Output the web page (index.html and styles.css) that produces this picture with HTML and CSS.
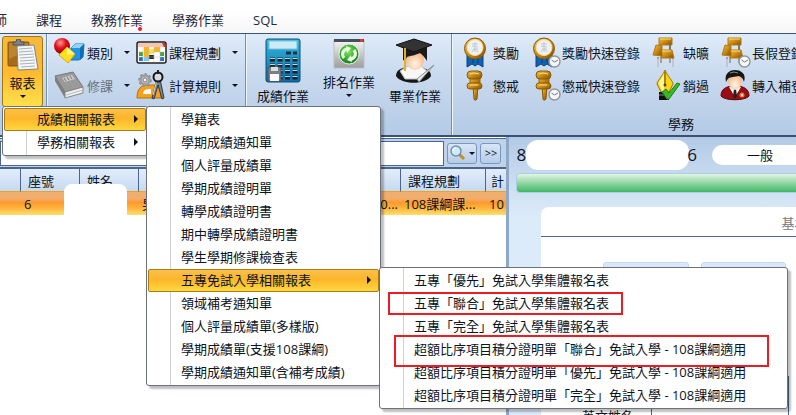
FILE: index.html
```html
<!DOCTYPE html>
<html lang="zh-Hant">
<head>
    <meta charset="UTF-8">
    <meta name="viewport" content="width=device-width, initial-scale=1.0">
    <title>成績相關報表</title>
    <link rel="stylesheet" href="styles.css">
</head>
<body>
    <!-- Shared gradients and icons -->
    <svg class="defs" width="0" height="0" aria-hidden="true">
        <defs>
            <linearGradient id="gold" x1="0" y1="0" x2="1" y2="1">
                <stop offset="0" stop-color="#f3c04a"/><stop offset="0.5" stop-color="#c98a14"/><stop offset="1" stop-color="#7d4b00"/>
            </linearGradient>
            <linearGradient id="silver" x1="0" y1="0" x2="0" y2="1">
                <stop offset="0" stop-color="#f6f6f6"/><stop offset="1" stop-color="#9c9c9c"/>
            </linearGradient>
            <linearGradient id="sky" x1="0" y1="0" x2="0" y2="1">
                <stop offset="0" stop-color="#35b5dc"/><stop offset="1" stop-color="#0b6ba8"/>
            </linearGradient>
            <radialGradient id="red" cx="0.4" cy="0.3" r="0.7">
                <stop offset="0" stop-color="#ff9a90"/><stop offset="0.5" stop-color="#e2101a"/><stop offset="1" stop-color="#8e0008"/>
            </radialGradient>
            <radialGradient id="green" cx="0.45" cy="0.35" r="0.7">
                <stop offset="0" stop-color="#8fe86a"/><stop offset="0.6" stop-color="#2fa52b"/><stop offset="1" stop-color="#0d6d17"/>
            </radialGradient>
            <radialGradient id="skin" cx="0.5" cy="0.7" r="0.7">
                <stop offset="0" stop-color="#fff6ee"/><stop offset="1" stop-color="#f5a868"/>
            </radialGradient>
            <g id="clock">
                <circle cx="24.5" cy="24.5" r="5.5" fill="#f7f8fa" stroke="#8f949c" stroke-width="1.4"/>
                <path d="M21.5 23l3 2 3.500-2" fill="none" stroke="#777" stroke-width="1"/>
            </g>
            <symbol id="i-medal" viewBox="0 0 31 31">
                <path d="M6 17v13l5-3 3 2 3-2 5 3V17z" fill="#0f62b4" stroke="#0a438a"/>
                <path d="M12 20v6M17 20v6" stroke="#073c7c"/>
                <circle cx="14" cy="11.500" r="10.500" fill="url(#gold)" stroke="#8a5a06"/>
                <circle cx="14" cy="10.500" r="8" fill="#eef1f4" stroke="#f9dc8b"/>
                <path d="M11 7h6M14 5v4M11 9l6 1M12 12h5M14 10v5M11 15l2-3M17 15l-2-3" stroke="#c3c8ce" stroke-width="1" fill="none"/>
            </symbol>
            <symbol id="i-gavel" viewBox="0 0 31 31">
                <path d="M12 16h5l-1 13c-1 1.500-3 1.500-3 0z" fill="url(#gold)" stroke="#8a5a06"/>
                <rect x="9" y="5" width="10" height="12" fill="url(#gold)" stroke="#9b680c"/>
                <rect x="6" y="1" width="15" height="8" rx="4" fill="url(#gold)" stroke="#8a5a06"/>
                <rect x="6" y="13" width="15" height="6" rx="3" fill="url(#gold)" stroke="#8a5a06"/>
                <path d="M9 4q4-2 9 0M9 15h8" stroke="#ffdf8a" fill="none"/>
            </symbol>
            <symbol id="i-medal-clock" viewBox="0 0 31 31">
                <use href="#i-medal" width="31" height="31"/><use href="#clock"/>
            </symbol>
            <symbol id="i-gavel-clock" viewBox="0 0 31 31">
                <use href="#i-gavel" width="31" height="31"/><use href="#clock"/>
            </symbol>
            <symbol id="i-chair" viewBox="0 0 31 31">
                <path d="M7 20v10M22 20v10M10 20v6M19 20v6" stroke="#8c9096" stroke-width="1.500"/>
                <path d="M7 22v8M22 22v8" stroke="#fff" stroke-width="0.800"/>
                <path d="M10 8v5M19 8v5" stroke="#777" stroke-width="2"/>
                <path d="M8 1h13v7H8z" fill="url(#gold)" stroke="#b37a12"/>
                <path d="M10 13h11l2 8H10z" fill="url(#gold)" stroke="#b37a12"/>
                <path d="M5 8l6 1v10l-9-1z" fill="url(#gold)" stroke="#b37a12"/>
                <path d="M9 2h11M11 14h9" stroke="#ffd96e"/>
            </symbol>
            <symbol id="i-chair-clock" viewBox="0 0 31 31">
                <use href="#i-chair" width="31" height="31"/><use href="#clock"/>
            </symbol>
            <symbol id="i-pen" viewBox="0 0 31 31">
                <path d="M8 22h10v8H8z" fill="#111"/>
                <path d="M8 25h10" stroke="#888"/>
                <path d="M14 0C11 7 6 11 6 14l4 8h8l4-8c0-3-5-7-8-14z" fill="#fbd317" stroke="#a67400"/>
                <path d="M13 3c-2 5-5 8-5 11l3 7h2z" fill="#fff79b"/>
                <path d="M14 2v12" stroke="#5a3b00"/><circle cx="14" cy="15" r="1.500" fill="#5a3b00"/>
                <path d="M11 22l4-3 3 4 8-10 3 1-11 15h-2z" fill="#3cb62b" stroke="#1b8415"/>
            </symbol>
            <symbol id="i-student" viewBox="0 0 31 31">
                <path d="M1 26c0-7 5-10 14-10s14 3 14 10c-4 5-24 5-28 0z" fill="#9b0d15" stroke="#5c0308"/>
                <path d="M9 17l6 10 6-10z" fill="#fff"/><path d="M14 19h2l1 7-2 3-2-3z" fill="#222"/>
                <ellipse cx="15" cy="11" rx="7" ry="9" fill="url(#skin)"/>
                <path d="M6 12C4 3 10 0 15 0s12 3 9 12c-1-4-3-5-5-6-4 1-9 1-10 2-2 1-2 3-3 4z" fill="#161616"/>
                <path d="M10 3q4-2 8 0" stroke="#888" fill="none"/>
                <circle cx="22" cy="25" r="2.500" fill="#f27b36"/><circle cx="22" cy="25" r="1" fill="#fff"/>
            </symbol>
            <symbol id="i-shapes" viewBox="0 0 31 31">
                <path d="M17 11l4-4h9l-1 13-4 3h-8z" fill="#2393df" stroke="#1872b4"/>
                <path d="M17 11l4-4h9l-4 4z" fill="#8ed4fb"/><path d="M26 11l4-4-1 13-3 3z" fill="#0f6db7"/>
                <circle cx="8" cy="9" r="8" fill="url(#red)"/>
                <path d="M13 10l8 7-7 9-9-8z" fill="#ffe01f" stroke="#e0a900"/><path d="M13 10l8 7-8 1z" fill="#fff27e"/>
            </symbol>
            <symbol id="i-book" viewBox="0 0 31 31">
                <path d="M1 6L19 2l10 15-18 5z" fill="#9a9a9a" stroke="#777"/>
                <path d="M1 6l10 16v6L1 11z" fill="#7e7e7e"/>
                <path d="M11 22l18-5v6l-18 5z" fill="#efefef" stroke="#888"/>
                <path d="M12 25l17-5" stroke="#bbb"/>
                <path d="M8 8l10-3 3 4-10 3z" fill="#c9c9c9"/><path d="M10 8l2 3M13 7l2 3M16 6l2 3" stroke="#777"/>
            </symbol>
            <symbol id="i-calendar" viewBox="0 0 31 23">
                <rect x="1" y="1" width="29" height="21" rx="2" fill="#fff" stroke="#222" stroke-width="1.500"/>
                <path d="M2 2h27v4H2z" fill="#f8c4b8"/><path d="M26 2h3v4h-1z" fill="#e02b1e"/>
                <path d="M8 6h5v10H8zM18 6h6v5h-6z" fill="#f8b51b"/><path d="M13 8h5v5h-5z" fill="#ffe25a"/>
                <path d="M3 11h4v4H3zM24 11h4v4h-4z" fill="#3fa935"/><path d="M3 16h4v4H3zM24 16h4v4h-4z" fill="#2a6fcb"/>
                <path d="M13 14h5v4h-5z" fill="#222"/><path d="M8 16h5v4H8z" fill="#7ec8ef"/>
                <path d="M7 6v15M13 6v15M18 6v15M24 6v15M2 11h27M2 16h27" stroke="#bbb" stroke-width="0.500"/>
            </symbol>
            <symbol id="i-compass" viewBox="0 0 31 31">
                <path d="M1 28c0-9 4-13 10-13h14v13z" fill="#f6a11e" stroke="#c16c00"/>
                <path d="M7 24c0-4 3-5 8-5v5z" fill="#fff"/>
                <circle cx="9" cy="10" r="4.500" fill="#c5c8cc" stroke="#9a9ea3" stroke-width="2.500"/>
                <circle cx="9" cy="10" r="6" fill="none" stroke="#8b8f94" stroke-width="1.500" stroke-dasharray="2.500 2"/>
                <circle cx="9" cy="10" r="2" fill="#fff" stroke="#777"/>
                <path d="M21 9l-5 19 2 1 4-14 4 14 2-1-4-19z" fill="#7b828a" stroke="#34393f"/>
                <path d="M21 10l-4 15" stroke="#ddd"/>
                <circle cx="22" cy="7" r="4.500" fill="#d8dce1" stroke="#15181c" stroke-width="2"/><path d="M22 0v4" stroke="#222" stroke-width="2"/>
            </symbol>
            <symbol id="i-clipboard" viewBox="0 0 32 33">
                <rect x="1" y="3" width="21" height="24" rx="1" fill="#a66b1c" stroke="#8a5814"/>
                <path d="M2 4h19v7L2 20z" fill="#bd852f"/>
                <path d="M6 6V3h3l1-3h3l1 3h3v3z" fill="#7d8389" stroke="#4d5357"/>
                <path d="M10 7l17-1 4 24-20 1z" fill="#f4f6f7" stroke="#7c858a"/>
                <path d="M12 10l13-1M12 13l14-1M12 16l15-1M13 19l14-1M13 22l15-1M13 25l15-1M14 28l14-1" stroke="#aab3b9"/>
            </symbol>
            <symbol id="i-calc" viewBox="0 0 36 46">
                <rect x="1" y="1" width="34" height="43" rx="2" fill="url(#sky)" stroke="#0a5079"/>
                <rect x="4" y="3" width="28" height="8" fill="#ccecf8" stroke="#77c2df"/>
                <path d="M21 15h5M28 15h4" stroke="#133646" stroke-width="3"/>
                <path d="M5 21.500h28M5 27.500h28M5 33.500h28M5 39.500h28" stroke="#17242c" stroke-width="4" stroke-dasharray="5 2.500"/>
                <path d="M5 20.500h28M5 26.500h28M5 32.500h28M5 38.500h28" stroke="#b9d9e8" stroke-width="1" stroke-dasharray="5 2.500"/>
                <path d="M3 29h13v14H3z" fill="#76808b" stroke="#4a525b"/><path d="M6 29h7v4H6z" fill="#ddd"/><path d="M5 36h9v7H5z" fill="#fafafa"/>
            </symbol>
            <symbol id="i-refresh" viewBox="0 0 32 30">
                <rect x="1" y="1" width="30" height="28" fill="url(#silver)" stroke="#b9bfc6"/>
                <path d="M1 0h30v3H1z" fill="#474f5c"/><path d="M27 0h3v3h-3z" fill="#dc3a37"/>
                <circle cx="16" cy="15" r="10" fill="url(#green)" stroke="#fff" stroke-width="0.800"/>
                <path d="M11 19c-3-4-1-8 3-9M21 11c3 4 1 8-3 9" fill="none" stroke="#e9ffe4" stroke-width="3"/>
                <path d="M13 7l5 2-4 5zM19 23l-5-2 4-5z" fill="#e9ffe4"/>
            </symbol>
            <symbol id="i-graduate" viewBox="0 0 42 46">
                <path d="M2 38c0-6 5-9 17-9s18 3 18 9c-5 9-30 9-35 0z" fill="#161616"/>
                <path d="M6 33l8-5h13l6 5-8 8H11z" fill="#f7f7f7" stroke="#bbb"/>
                <ellipse cx="21" cy="22" rx="9" ry="10" fill="url(#skin)"/>
                <path d="M9 22V9h24v14c-2-3-4-6-7-8-4 2-10 3-13 4l-2 4z" fill="#1b1b1b"/>
                <path d="M2 7l18-6 18 6-18 7z" fill="#333" stroke="#111"/>
                <path d="M11 10v23" stroke="#e3ae21" stroke-width="2"/>
                <path d="M40 27L25 44l-2-3z" fill="#e9ecef" stroke="#888"/>
            </symbol>
            <symbol id="i-search" viewBox="0 0 16 16">
                <path d="M9 9l5 5" stroke="#c78a24" stroke-width="3"/>
                <circle cx="6" cy="6" r="5" fill="#cdebfb" stroke="#7390ad" stroke-width="1.500"/><path d="M3 6q0-3 3-3" stroke="#fff" fill="none" stroke-width="1.500"/>
            </symbol>
        </defs>
    </svg>

    <!-- Tabs -->
    <nav class="tabs">
        <a href="#">導師</a>
        <a href="#">課程</a>
        <a href="#" class="marked">教務作業</a>
        <a href="#">學務作業</a>
        <a href="#">SQL</a>
    </nav>

    <!-- Ribbon -->
    <div class="ribbon">
        <div class="group report-group">
            <button class="report-button">
                <svg width="32" height="33"><use href="#i-clipboard"/></svg>
                <span>報表</span>
                <i class="caret"></i>
            </button>

            <ul class="menu main-menu">
                <li>
                    <button class="active">成績相關報表<i class="arrow"></i></button>
                    <ul class="menu score-menu">
                        <li><button>學籍表</button></li>
                        <li><button>學期成績通知單</button></li>
                        <li><button>個人評量成績單</button></li>
                        <li><button>學期成績證明單</button></li>
                        <li><button>轉學成績證明書</button></li>
                        <li><button>期中轉學成績證明書</button></li>
                        <li><button>學生學期修課檢查表</button></li>
                        <li>
                            <button class="active">五專免試入學相關報表<i class="arrow"></i></button>
                            <ul class="menu exam-menu">
                                <li><button>五專「優先」免試入學集體報名表</button></li>
                                <li><button>五專「聯合」免試入學集體報名表</button></li>
                                <li><button>五專「完全」免試入學集體報名表</button></li>
                                <li><button>超額比序項目積分證明單「聯合」免試入學 - 108課綱適用</button></li>
                                <li><button>超額比序項目積分證明單「優先」免試入學 - 108課綱適用</button></li>
                                <li><button>超額比序項目積分證明單「完全」免試入學 - 108課綱適用</button></li>
                            </ul>
                        </li>
                        <li><button>領域補考通知單</button></li>
                        <li><button>個人評量成績單(多樣版)</button></li>
                        <li><button>學期成績單(支援108課綱)</button></li>
                        <li><button>學期成績通知單(含補考成績)</button></li>
                    </ul>
                </li>
                <li><button>學務相關報表<i class="arrow"></i></button></li>
            </ul>
        </div>

        <div class="group course-group">
            <button class="tool"><svg width="31" height="31"><use href="#i-shapes"/></svg>類別<i class="caret"></i></button>
            <button class="tool"><svg width="31" height="23"><use href="#i-calendar"/></svg>課程規劃<i class="caret"></i></button>
            <button class="tool dim"><svg width="31" height="31"><use href="#i-book"/></svg>修課<i class="caret"></i></button>
            <button class="tool"><svg width="31" height="31"><use href="#i-compass"/></svg>計算規則<i class="caret"></i></button>
        </div>

        <div class="group work-group">
            <button class="big"><svg width="36" height="46"><use href="#i-calc"/></svg>成績作業</button>
            <button class="big"><svg width="32" height="32"><use href="#i-refresh"/></svg>排名作業<i class="caret"></i></button>
            <button class="big"><svg width="42" height="46"><use href="#i-graduate"/></svg>畢業作業</button>
        </div>

        <div class="group affairs-group">
            <div class="affairs-tools">
                <button class="tool"><svg width="31" height="31"><use href="#i-medal"/></svg>獎勵</button>
                <button class="tool"><svg width="31" height="31"><use href="#i-medal-clock"/></svg>獎勵快速登錄</button>
                <button class="tool"><svg width="31" height="31"><use href="#i-chair"/></svg>缺曠</button>
                <button class="tool"><svg width="31" height="31"><use href="#i-chair-clock"/></svg>長假登錄</button>
                <button class="tool"><svg width="31" height="31"><use href="#i-gavel"/></svg>懲戒</button>
                <button class="tool"><svg width="31" height="31"><use href="#i-gavel-clock"/></svg>懲戒快速登錄</button>
                <button class="tool"><svg width="31" height="31"><use href="#i-pen"/></svg>銷過</button>
                <button class="tool"><svg width="31" height="31"><use href="#i-student"/></svg>轉入補登</button>
            </div>
            <div class="caption">學務</div>
        </div>
    </div>

    <main class="workspace">
        <!-- Student list -->
        <section class="list">
            <div class="search">
                <input type="text" aria-label="搜尋">
                <button class="find" aria-label="搜尋"><svg width="16" height="16"><use href="#i-search"/></svg><i class="caret"></i></button>
                <button class="more">&gt;&gt;</button>
            </div>
            <table>
                <colgroup>
                    <col class="c-class"><col class="c-seat"><col class="c-name"><col class="c-gender"><col class="c-plan"><col class="c-rule">
                </colgroup>
                <thead>
                    <tr><th></th><th>座號</th><th>姓名</th><th>性別</th><th>課程規劃</th><th>計</th></tr>
                </thead>
                <tbody>
                    <tr><td></td><td>6</td><td></td><td><div class="gender"><span>男</span><span>10...</span></div></td><td>108課綱課...</td><td>10</td></tr>
                </tbody>
            </table>
            <div class="name-mask"></div>
        </section>

        <!-- Student detail -->
        <section class="detail">
            <header>
                <span>8</span>
                <span class="title-mask"></span>
                <span class="tail">6</span>
                <span class="status">一般</span>
            </header>
            <div class="bar"></div>
            <div class="card">
                <h2>基本資料</h2>
                <div class="panels"><div></div><div></div></div>
                <div class="form"><label for="english-name">英文姓名</label><input id="english-name" type="text"></div>
            </div>
        </section>
    </main>

    <div class="highlight highlight-form"></div>
    <div class="highlight highlight-proof"></div>
</body>
</html>
```
FILE: styles.css
```css
* {
    box-sizing: border-box;
}
body {
    margin: 0;
    height: 100vh;
    display: flex;
    flex-direction: column;
    overflow: hidden;
    font-family: "Open Sans", "Noto Sans CJK TC", sans-serif;
    font-size: 13px;
    line-height: 18px;
    color: #0c1322;
    background: #fff;
}
button, input {
    font: inherit;
    color: inherit;
    margin: 0;
    padding: 0;
    border: 0;
    background: none;
}
button {
    white-space: nowrap;
    cursor: pointer;
}
svg {
    display: block;
    flex: none;
}
.defs {
    position: absolute;
}
.caret {
    flex: none;
    border: 3px solid transparent;
    border-top-color: #0c1322;
    border-bottom: 0;
}
.arrow {
    border: 4px solid transparent;
    border-left-color: #0c1322;
    border-right: 0;
}

/* Tabs */
.tabs {
    flex: none;
    display: flex;
    align-items: center;
    height: 33px;
    padding-top: 6px;
    margin-left: -19px;
    gap: 29px;
    background: linear-gradient(#fff 30%, #f6f6f6);
}
.tabs a {
    position: relative;
    flex: none;
    color: #1f2a40;
    text-decoration: none;
}
.marked::after {
    content: "";
    position: absolute;
    right: 1px;
    bottom: -2px;
    width: 4px;
    height: 4px;
    border-radius: 50%;
    background: #ed1c24;
}

/* Ribbon */
.ribbon {
    flex: none;
    display: flex;
    height: 104px;
    border-top: 1px solid #39557f;
    border-bottom: 2px solid #3a5272;
    background: linear-gradient(#dfebf9, #c9daee 40%, #b4cae5);
}
.group {
    flex: none;
    border-right: 1px solid #7590b6;
    box-shadow: 1px 0 #eef5fc;
}
.report-group {
    position: relative;
    padding: 2px 3px 0 2px;
}
.report-button {
    display: flex;
    flex-direction: column;
    align-items: center;
    width: 41px;
    height: 71px;
    padding-top: 2px;
    border: 1px solid #a4760f;
    border-radius: 3px;
    background: linear-gradient(#f6b93a, #fdb930 50%, #ffe04a);
}
.report-button span {
    margin: 2px 0 3px;
}
.course-group {
    display: grid;
    grid-template-columns: 82px 108px;
    grid-template-rows: 33px 33px;
    padding: 2px 1px 0 7px;
}
.tool {
    display: flex;
    align-items: center;
    gap: 2px;
}
.tool .caret {
    margin-left: 9px;
}
.dim {
    color: #66707e;
}
.work-group {
    display: flex;
    align-items: flex-start;
    gap: 14px;
    padding: 4px 10px 0 11px;
}
.big {
    display: flex;
    flex-direction: column;
    align-items: center;
}
.big svg {
    margin-bottom: 3px;
}
.big .caret {
    margin-top: 3px;
}
.affairs-group {
    display: flex;
    flex-direction: column;
    justify-content: space-between;
    width: 460px;
    padding: 2px 10px 2px 9px;
}
.affairs-tools {
    display: grid;
    grid-template-columns: 69px 121px 69px 120px;
    grid-template-rows: 33px 33px;
}
.affairs-tools .tool {
    gap: 1px;
}
.caption {
    text-align: center;
}

/* Menus */
.menu {
    position: absolute;
    z-index: 5;
    margin: 0;
    padding: 1px;
    list-style: none;
    border: 1px solid #6c717a;
    border-radius: 3px;
    background: linear-gradient(90deg, transparent 23px, #cdd0d4 23px, #cdd0d4 24px, transparent 24px) #fff;
    box-shadow: 3px 3px 2px rgba(0, 0, 0, 0.25);
}
.main-menu {
    top: 72px;
    left: 2px;
    width: 146px;
}
.score-menu {
    top: -2px;
    left: 100%;
    width: 235px;
}
.exam-menu {
    top: -2px;
    left: 100%;
    width: 409px;
}
.menu li {
    position: relative;
}
.menu button {
    display: flex;
    align-items: center;
    justify-content: space-between;
    width: 100%;
    height: 23px;
    padding: 0 7px 2px 32px;
    border: 1px solid transparent;
    border-radius: 2px;
    text-align: left;
}
.menu .active {
    border-color: #a57c18;
    background: linear-gradient(#f9c04a, #fdb52b 45%, #ffd83e);
}

/* Workspace */
.workspace {
    flex: 1;
    min-height: 0;
    display: grid;
    grid-template-columns: 64% 1fr;
}
.list {
    position: relative;
    overflow: hidden;
    padding-top: 1px;
    border-right: 3px solid #8fa8c8;
    background: #fff;
}
.search {
    display: flex;
    align-items: center;
    gap: 3px;
    height: 31px;
    padding: 0 5px 0 0;
    border-top: 1px solid #4a658e;
    border-bottom: 2px solid #4a658e;
    background: #bed2ea;
}
.search input {
    flex: 1;
    height: 25px;
    border: 1px solid #4a658e;
    background: #fff;
}
.search button {
    display: flex;
    align-items: center;
    justify-content: center;
    height: 21px;
    border: 1px solid #7b97bd;
    border-radius: 3px;
    background: linear-gradient(#d8e6f6, #b5cbe6);
}
.find {
    width: 30px;
    gap: 3px;
}
.more {
    width: 21px;
    font-size: 11px;
}
table {
    width: 100%;
    table-layout: fixed;
    border-collapse: separate;
    border-spacing: 0;
    white-space: nowrap;
}
.c-class {
    width: 21px;
}
.c-seat, .c-name {
    width: 59px;
}
.c-gender {
    width: 262px;
}
.c-plan {
    width: 85px;
}
th, td {
    overflow: hidden;
    text-align: left;
    font-weight: normal;
}
th {
    height: 23px;
    padding: 2px 0 0 7px;
    border-right: 1px solid #4a658e;
    border-bottom: 1px solid #e9a520;
    background: linear-gradient(#e2edfa, #c6d9f1);
}
th:last-child {
    padding-left: 5px;
    border-right: 0;
}
td {
    height: 23px;
    padding: 0 3px;
    background: linear-gradient(#f0ad6c 30%, #fe9a2c 45%, #ffae38 65%, #ffe069);
}
td:last-child {
    padding-right: 0;
}
.gender {
    display: flex;
    justify-content: space-between;
}
.name-mask {
    position: absolute;
    top: 47px;
    left: 64px;
    width: 63px;
    height: 32px;
    border-radius: 8px 8px 0 0;
    background: #fff;
}

/* Detail */
.detail {
    display: flex;
    flex-direction: column;
    min-width: 0;
    overflow: hidden;
    padding-left: 7px;
    background: linear-gradient(#b3cae7, #dcebfa 80px);
}
.detail header {
    flex: none;
    display: flex;
    align-items: center;
    height: 36px;
    font-size: 17px;
}
.title-mask {
    flex: 1;
    height: 30px;
    border-radius: 12px;
    background: #fff;
}
.tail {
    margin-left: -2px;
}
.status {
    width: 100px;
    height: 20px;
    margin: 0 -16px 0 15px;
    padding-left: 35px;
    border-radius: 10px;
    font-size: 13px;
    line-height: 20px;
    background: #fff;
}
.bar {
    flex: none;
    height: 20px;
    border: 1px solid #a9cfe0;
    border-right: 0;
    border-radius: 4px 0 0 4px;
    background: linear-gradient(#e4f5e4, #3fb862);
}
.card {
    flex: 1;
    margin: 14px 0 0 25px;
    border-radius: 8px 0 0 0;
    background: #fff;
}
.card h2 {
    height: 30px;
    margin: 0 -40px 0 0;
    padding: 7px 0 0 240px;
    border-bottom: 1px solid #4a658e;
    font-size: 13px;
    font-weight: normal;
    color: #777;
    white-space: nowrap;
}
.panels {
    display: flex;
    gap: 12px;
    padding: 25px 10px 0 62px;
}
.panels div {
    flex: 1;
    height: 90px;
    border: 1px solid #c1dbf5;
    border-radius: 3px;
    background: #d9e9fb;
}
.form {
    display: flex;
    justify-content: flex-end;
    margin: 24px 7px 0 0;
    border-right: 1px solid #4a658e;
}
.form label {
    padding: 31px 17px 0 0;
}
.form input {
    width: 137px;
    height: 50px;
    border-left: 1px solid #4a658e;
}

/* Callouts */
.highlight {
    position: absolute;
    z-index: 10;
    border: 2px solid #ed1c24;
    pointer-events: none;
}
.highlight-form {
    top: 292px;
    left: 388px;
    width: 235px;
    height: 23px;
}
.highlight-proof {
    top: 335px;
    left: 394px;
    width: 375px;
    height: 32px;
}
```
